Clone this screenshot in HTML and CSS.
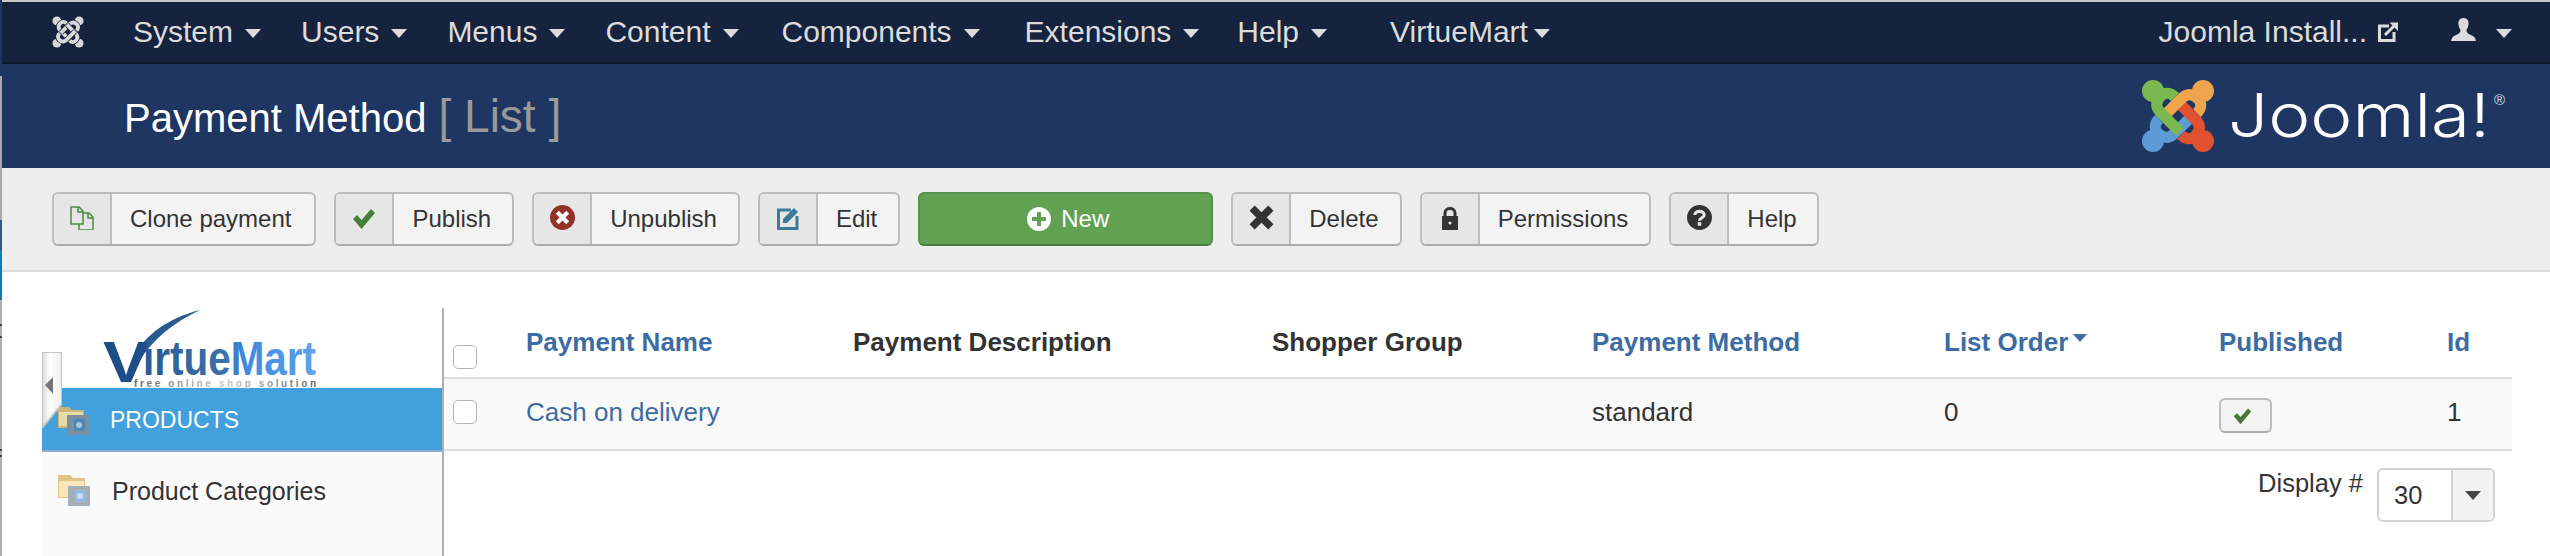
FILE: index.html
```html
<!DOCTYPE html>
<html lang="en">
<head>
<meta charset="utf-8">
<title>Payment Method [ List ]</title>
<link rel="stylesheet" href="styles.css">
</head>
<body>
<div class="page">
  <div class="strip"></div>
  <div class="main">
    <div class="topline"></div>
    <nav class="nav">
      <svg class="nav-logo" viewBox="0 0 72 72">
        <g class="mono-arm"><circle cx="11" cy="11" r="10"/><path class="arm-gap" d="M33 17C28 12 22 12 18 17C13 23 14 28 19 33L38 52"/><path class="arm-line" d="M33 17C28 12 22 12 18 17C13 23 14 28 19 33L38 52"/></g>
        <g class="mono-arm" transform="rotate(90 36 36)"><circle cx="11" cy="11" r="10"/><path class="arm-gap" d="M33 17C28 12 22 12 18 17C13 23 14 28 19 33L38 52"/><path class="arm-line" d="M33 17C28 12 22 12 18 17C13 23 14 28 19 33L38 52"/></g>
        <g class="mono-arm" transform="rotate(180 36 36)"><circle cx="11" cy="11" r="10"/><path class="arm-gap" d="M33 17C28 12 22 12 18 17C13 23 14 28 19 33L38 52"/><path class="arm-line" d="M33 17C28 12 22 12 18 17C13 23 14 28 19 33L38 52"/></g>
        <g class="mono-arm" transform="rotate(270 36 36)"><circle cx="11" cy="11" r="10"/><path class="arm-gap" d="M33 17C28 12 22 12 18 17C13 23 14 28 19 33L38 52"/><path class="arm-line" d="M33 17C28 12 22 12 18 17C13 23 14 28 19 33L38 52"/></g>
      </svg>
      <ul class="menu">
        <li class="menu-item">System<span class="caret"></span></li>
        <li class="menu-item">Users<span class="caret"></span></li>
        <li class="menu-item">Menus<span class="caret"></span></li>
        <li class="menu-item">Content<span class="caret"></span></li>
        <li class="menu-item menu-comp">Components<span class="caret"></span></li>
        <li class="menu-item menu-ext">Extensions<span class="caret"></span></li>
        <li class="menu-item">Help<span class="caret"></span></li>
        <li class="menu-item menu-vm">VirtueMart<span class="caret"></span></li>
      </ul>
      <div class="nav-right">
        <span class="site-link">Joomla Install...</span>
        <svg class="ext-icon" viewBox="0 0 20 20"><path d="M11 4H1.500V18.500H16V10" fill="none" stroke="#dcdcdc" stroke-width="3"/><path d="M7 13L16 4" stroke="#dcdcdc" stroke-width="3"/><path d="M11.500 0.500H20V9Z" fill="#dcdcdc"/></svg>
        <svg class="user-icon" viewBox="0 0 25 23"><path d="M12.500 0C8.500 0 7 3 7.500 6.500C7.800 9 9 11 9.500 12.500C9.500 15 7 16 4 17.500C1.500 18.800 0.500 20.500 0 23H25C24.500 20.500 23.500 18.800 21 17.500C18 16 15.500 15 15.500 12.500C16 11 17.200 9 17.500 6.500C18 3 16.500 0 12.500 0Z" fill="#dcdcdc"/></svg>
        <span class="caret"></span>
      </div>
    </nav>
    <header class="header">
      <h1 class="title">Payment Method <small class="title-sub">[ List ]</small></h1>
      <svg class="brand" viewBox="0 0 368 76">
        <g transform="translate(0 2)">
          <g class="arm arm-blue" transform="rotate(270 36 36)"><circle cx="11" cy="11" r="11"/><path d="M33 17C28 12 22 12 18 17C13 23 14 28 19 33L38 52"/></g>
          <g class="arm arm-red" transform="rotate(180 36 36)"><circle cx="11" cy="11" r="11"/><path d="M33 17C28 12 22 12 18 17C13 23 14 28 19 33L38 52"/></g>
          <g class="arm arm-orange" transform="rotate(90 36 36)"><circle cx="11" cy="11" r="11"/><path d="M33 17C28 12 22 12 18 17C13 23 14 28 19 33L38 52"/></g>
          <g class="arm arm-green"><circle cx="11" cy="11" r="11"/><path d="M33 17C28 12 22 12 18 17C13 23 14 28 19 33L38 52"/></g>
        </g>
        <text class="brand-word" x="86" y="59" textLength="262" lengthAdjust="spacingAndGlyphs">Joomla!</text>
        <text class="brand-reg" x="352" y="27">®</text>
      </svg>
    </header>
    <div class="toolbar">
      <button class="btn btn-clone"><span class="btn-icon"><svg viewBox="0 0 24 24" width="24" height="24"><path d="M1 1H9L13 5V18H1Z M8 1V6H13 M13 7H19L23 11V24H9V18 M18 7V12H23" fill="none" stroke="#4c8a40" stroke-width="1.500"/></svg></span><span class="btn-text">Clone payment</span></button>
      <button class="btn"><span class="btn-icon"><svg viewBox="0 0 24 24" width="24" height="24"><path d="M1 13L5 9L9.500 14L19 3L23 7L9.500 23Z" fill="#47803a"/></svg></span><span class="btn-text">Publish</span></button>
      <button class="btn"><span class="btn-icon"><svg viewBox="0 0 24 24" width="25" height="25"><circle cx="12" cy="12" r="12" fill="#94322a"/><path d="M7 7L17 17M17 7L7 17" stroke="#fff" stroke-width="4"/></svg></span><span class="btn-text">Unpublish</span></button>
      <button class="btn"><span class="btn-icon"><svg viewBox="0 0 24 24" width="24" height="24"><path d="M15 4H2.500V22.500H21V10" fill="none" stroke="#3a7d99" stroke-width="3"/><path d="M7 13L18 2L22 6L11 17H7Z" fill="#3a7d99"/></svg></span><span class="btn-text">Edit</span></button>
      <button class="btn btn-new"><svg viewBox="0 0 24 24" width="24" height="24"><circle cx="12" cy="12" r="12" fill="#fff"/><path d="M12 5V19M5 12H19" stroke="#60a152" stroke-width="4"/></svg><span>New</span></button>
      <button class="btn"><span class="btn-icon"><svg viewBox="0 0 24 24" width="25" height="25"><path d="M3 3L21 21M21 3L3 21" stroke="#333" stroke-width="7"/></svg></span><span class="btn-text">Delete</span></button>
      <button class="btn"><span class="btn-icon"><svg viewBox="0 0 24 24" width="24" height="24"><path d="M7 11V7C7 1 17 1 17 7V11" fill="none" stroke="#333" stroke-width="3"/><path d="M4 10H20V24H4Z" fill="#333"/><circle cx="12" cy="17" r="1.500" fill="#e6e6e6"/></svg></span><span class="btn-text">Permissions</span></button>
      <button class="btn btn-help"><span class="btn-icon"><svg viewBox="0 0 24 24" width="25" height="25"><circle cx="12" cy="12" r="12" fill="#333"/><path d="M7.500 9.500C7.500 5 16.500 5 16.500 9.500C16.500 12.500 12 12 12 15" fill="none" stroke="#e6e6e6" stroke-width="3"/><rect x="10.300" y="16.500" width="3.400" height="3.400" fill="#e6e6e6"/></svg></span><span class="btn-text">Help</span></button>
    </div>
    <div class="content">
      <aside class="sidebar">
        <div class="vm-logo">
          <svg viewBox="0 0 214 78" width="214" height="78">
            <defs>
              <linearGradient id="vmFill" x1="0" x2="1" y1="0" y2="0"><stop offset="0" stop-color="#2a5a92"/><stop offset="0.45" stop-color="#3b6fa8"/><stop offset="0.6" stop-color="#3f8be0"/><stop offset="1" stop-color="#5fa3ea"/></linearGradient>
              <linearGradient id="vmTag" x1="0" x2="1" y1="0" y2="0"><stop offset="0" stop-color="#666"/><stop offset="0.5" stop-color="#ccc"/><stop offset="1" stop-color="#666"/></linearGradient>
            </defs>
            <path d="M30 48C42 24 66 8 97 0C72 12 50 28 36 52Z" fill="#2a5a90"/>
            <text class="vm-v" x="0" y="72" textLength="46" lengthAdjust="spacingAndGlyphs" fill="#1d4e87">V</text>
            <text class="vm-word" x="40" y="65" textLength="173" lengthAdjust="spacingAndGlyphs" fill="url(#vmFill)">irtueMart</text>
            <text class="vm-tag" x="31" y="77" textLength="182" fill="url(#vmTag)">free online shop solution</text>
          </svg>
        </div>
        <button class="toggle" aria-label="Collapse"><svg viewBox="0 0 20 76" width="20" height="76"><defs><linearGradient id="tg" x1="0" x2="1" y1="0" y2="0"><stop offset="0" stop-color="#d8d8d8"/><stop offset="0.4" stop-color="#fff"/><stop offset="1" stop-color="#eee"/></linearGradient></defs><path d="M0 0H20V52L0 76Z" fill="url(#tg)" stroke="#c4c4c4" stroke-width="2"/><path d="M3 33L11 25V42Z" fill="#777"/></svg></button>
        <div class="side-item side-active">
          <svg class="folder" viewBox="0 0 32 32"><path d="M1 3H12L15 6H27V24H1Z" fill="#cdb57a"/><path d="M2 8H26V22H2Z" fill="#e8dca6"/><rect x="10" y="11" width="22" height="20" fill="#7990a3"/><rect x="17" y="15" width="11" height="12" fill="#4f86b8"/><circle cx="22" cy="21" r="3" fill="#a9c6de"/></svg>
          <span>PRODUCTS</span>
        </div>
        <div class="side-item">
          <svg class="folder" viewBox="0 0 32 32"><path d="M0 0H12L15 3H27V23H0Z" fill="#e3c487"/><path d="M1 6H26V22H1Z" fill="#f7e7b8"/><rect x="10" y="11" width="22" height="20" fill="#a5afb6"/><rect x="17" y="15" width="11" height="12" fill="#8fbce4"/><circle cx="22" cy="21" r="3" fill="#cfe2f2"/></svg>
          <span>Product Categories</span>
        </div>
      </aside>
      <section class="list">
        <table class="grid">
          <colgroup>
            <col class="c-chk"><col class="c-name"><col class="c-desc"><col class="c-shop"><col class="c-method"><col class="c-order"><col class="c-pub"><col class="c-id">
          </colgroup>
          <thead>
            <tr>
              <th><input class="chk chk-head" type="checkbox"></th>
              <th class="link">Payment Name</th>
              <th>Payment Description</th>
              <th>Shopper Group</th>
              <th class="link">Payment Method</th>
              <th class="link">List Order<span class="sort-caret"></span></th>
              <th class="link">Published</th>
              <th class="link">Id</th>
            </tr>
          </thead>
          <tbody>
            <tr>
              <td><input class="chk chk-row" type="checkbox"></td>
              <td class="link">Cash on delivery</td>
              <td></td>
              <td></td>
              <td>standard</td>
              <td>0</td>
              <td><span class="pub-btn"><svg viewBox="0 0 24 24" width="19" height="19"><path d="M1 13L5 9L9.500 14L19 3L23 7L9.500 23Z" fill="#47773a"/></svg></span></td>
              <td>1</td>
            </tr>
          </tbody>
        </table>
        <div class="limit">
          <span class="limit-label">Display #</span>
          <div class="select"><span class="select-value">30</span><span class="select-arrow"><span class="select-caret"></span></span></div>
        </div>
      </section>
    </div>
  </div>
</div>
</body>
</html>
```

FILE: styles.css
```css
* { box-sizing: border-box; }
html, body { margin: 0; padding: 0; }
body { font-family: "Liberation Sans", Arial, sans-serif; color: #333; background: #fff; overflow: hidden; }

.page { display: flex; height: 556px; overflow: hidden; }
.strip {
  width: 2px; flex: none;
  background: linear-gradient(to bottom,
    #1f3662 0, #1f3662 76px, #a9a9a9 76px, #a9a9a9 220px, #2a5a8c 220px, #2a5a8c 250px,
    #0a7fb5 250px, #0a7fb5 300px, #b0b0b0 300px, #b0b0b0 324px, #444 324px, #444 326px,
    #b0b0b0 326px, #b0b0b0 336px, #444 336px, #444 338px, #b0b0b0 338px, #b0b0b0 449px,
    #444 449px, #444 451px, #b0b0b0 451px, #b0b0b0 455px, #444 455px, #444 457px, #b0b0b0 457px);
}
.main { flex: 1; min-width: 0; display: flex; flex-direction: column; }
.topline { height: 2px; background: #c8c8c8; }

/* top navigation */
.nav { height: 62px; background: #15233f; border-bottom: 2px solid #0e1930; display: flex; align-items: center; padding-left: 50px; color: #dcdcdc; font-size: 30px; }
.nav-logo { width: 32px; height: 32px; flex: none; margin-right: 49px; }
.mono-arm circle { fill: #d8d8d8; }
.arm-gap, .arm-line { fill: none; stroke-linecap: butt; }
.arm-gap { stroke: #15233f; stroke-width: 12; }
.arm-line { stroke: #d8d8d8; stroke-width: 8.500; }
.menu { list-style: none; margin: 0; padding: 0; display: flex; }
.menu-item { display: flex; align-items: center; gap: 12px; margin-right: 40px; }
.menu-comp { margin-left: 3px; }
.menu-ext { margin-left: 5px; margin-right: 38px; }
.menu-vm { margin-left: 23px; gap: 6px; }
.caret { display: inline-block; width: 0; height: 0; border-left: 8px solid transparent; border-right: 8px solid transparent; border-top: 9px solid #dcdcdc; margin-top: 3px; }
.nav-right { margin-left: auto; display: flex; align-items: center; padding-right: 38px; }
.site-link { margin-right: 11px; }
.ext-icon { width: 20px; height: 20px; margin-right: 53px; }
.user-icon { width: 25px; height: 23px; margin-right: 20px; margin-top: -6px; }

/* title bar */
.header { height: 104px; background: #1f3662; display: flex; align-items: center; justify-content: space-between; padding: 0 40px 0 122px; }
.title { margin: 0; font-size: 40px; font-weight: 400; color: #fff; line-height: 1; }
.title-sub { margin-left: 1px; font-size: 46px; color: #999; }
.brand { width: 368px; height: 76px; flex: none; }
.arm circle { stroke: none; }
.arm path { fill: none; stroke-width: 11; }
.arm-green circle { fill: #7ab851; } .arm-green path { stroke: #7ab851; }
.arm-orange circle { fill: #eea54e; } .arm-orange path { stroke: #eea54e; }
.arm-red circle { fill: #e2512f; } .arm-red path { stroke: #e2512f; }
.arm-blue circle { fill: #5c9bd6; } .arm-blue path { stroke: #5c9bd6; }
.brand-word { font-family: "Inter", "Open Sans", sans-serif; font-weight: 300; font-size: 60px; fill: #fff; }
.brand-reg { font-family: "Liberation Sans", Arial, sans-serif; font-size: 15px; fill: #d8dce4; }

/* toolbar */
.toolbar { height: 104px; background: #eee; border-bottom: 2px solid #ddd; display: flex; align-items: center; gap: 18px; padding-left: 50px; }
.btn { height: 54px; padding: 0; display: flex; align-items: stretch; background: #f3f3f3; border: 2px solid #bdbdbd; border-bottom-color: #adadad; border-radius: 6px; font: inherit; font-size: 24px; color: #333; }
.btn-icon { width: 58px; flex: none; background: #e6e6e6; border-right: 2px solid #bdbdbd; border-radius: 4px 0 0 4px; display: flex; align-items: center; justify-content: center; padding-bottom: 3px; }
.btn-text { padding: 0 21px 0 18px; display: flex; align-items: center; }
.btn-clone .btn-text { padding-right: 23px; }
.btn-help .btn-text { padding-right: 20px; }
.btn-new { width: 295px; padding-left: 5px; background: #60a152; border-color: #55914a; border-bottom-color: #4a8140; color: #fff; align-items: center; justify-content: center; gap: 10px; }

/* content */
.content { flex: 1; min-height: 0; display: flex; padding: 36px 38px 0 40px; }
.sidebar { position: relative; width: 402px; flex: none; border-right: 2px solid #b0b0b0; background: #fafafa; }
.vm-logo { height: 80px; background: #fff; padding: 2px 0 0 61px; }
.vm-logo svg { display: block; overflow: visible; }
.vm-word { font-family: "Liberation Sans", Arial, sans-serif; font-weight: 700; font-size: 48px; }
.vm-v { font-family: "Liberation Sans", Arial, sans-serif; font-weight: 700; font-size: 58px; }
.vm-tag { font-family: "Liberation Sans", Arial, sans-serif; font-weight: 700; font-size: 10px; }
.toggle { position: absolute; left: 0; top: 44px; width: 20px; height: 76px; padding: 0; border: 0; background: none; z-index: 2; }
.toggle svg { display: block; }
.side-item { height: 62px; display: flex; align-items: center; gap: 22px; padding-left: 16px; font-size: 25px; color: #333; }
.side-item + .side-item { margin-top: 8px; }
.side-active { height: 64px; background: #42a0dc; border-bottom: 2px solid #8eaacd; color: #fff; font-size: 23px; padding-left: 15px; gap: 21px; padding-top: 2px; }
.folder { width: 32px; height: 32px; flex: none; }

/* list */
.list { flex: 1; min-width: 0; }
.grid { width: 2068px; table-layout: fixed; border-collapse: collapse; font-size: 26px; }
.c-chk { width: 74px; } .c-name { width: 327px; } .c-desc { width: 419px; } .c-shop { width: 320px; }
.c-method { width: 352px; } .c-order { width: 275px; } .c-pub { width: 228px; } .c-id { width: 73px; }
.grid th, .grid td { padding: 0 8px; text-align: left; vertical-align: middle; }
.grid th { height: 70px; border-bottom: 2px solid #ddd; font-size: 26px; font-weight: 700; }
.grid td { height: 72px; padding-bottom: 3px; background: #f9f9f9; border-bottom: 2px solid #ddd; }
.link { color: #3d6ca3; }
.grid th.link { color: #3d6ca3; }
.chk { appearance: none; display: block; margin: 0 0 0 1px; width: 24px; height: 24px; background: #fff; border: 1.500px solid #b5b5b5; border-radius: 5px; }
.chk-head { margin-top: 29px; }
.chk-row { margin-top: -2px; }
.sort-caret { display: inline-block; width: 0; height: 0; margin: 0 0 12px 5px; vertical-align: middle; border-left: 7px solid transparent; border-right: 7px solid transparent; border-top: 8px solid #3d6ca3; }
.pub-btn { display: inline-flex; align-items: center; justify-content: center; width: 53px; height: 35px; padding-right: 6px; margin-top: 5px; vertical-align: middle; background: #f3f3f3; border: 2px solid #bdbdbd; border-bottom-color: #adadad; border-radius: 6px; }
.limit { display: flex; justify-content: flex-end; align-items: flex-start; gap: 14px; padding: 17px 17px 0 0; }
.limit-label { font-size: 25.500px; line-height: 30px; }
.select { width: 118px; height: 54px; display: flex; background: #fff; border: 2px solid #d2d2d2; border-radius: 6px; font-size: 25.500px; }
.select-value { width: 74px; padding-left: 15px; line-height: 50px; border-right: 2px solid #d2d2d2; }
.select-arrow { flex: 1; background: #f2f2f2; border-radius: 0 4px 4px 0; display: flex; align-items: center; justify-content: center; }
.select-caret { width: 0; height: 0; border-left: 8px solid transparent; border-right: 8px solid transparent; border-top: 9px solid #444; }
```
